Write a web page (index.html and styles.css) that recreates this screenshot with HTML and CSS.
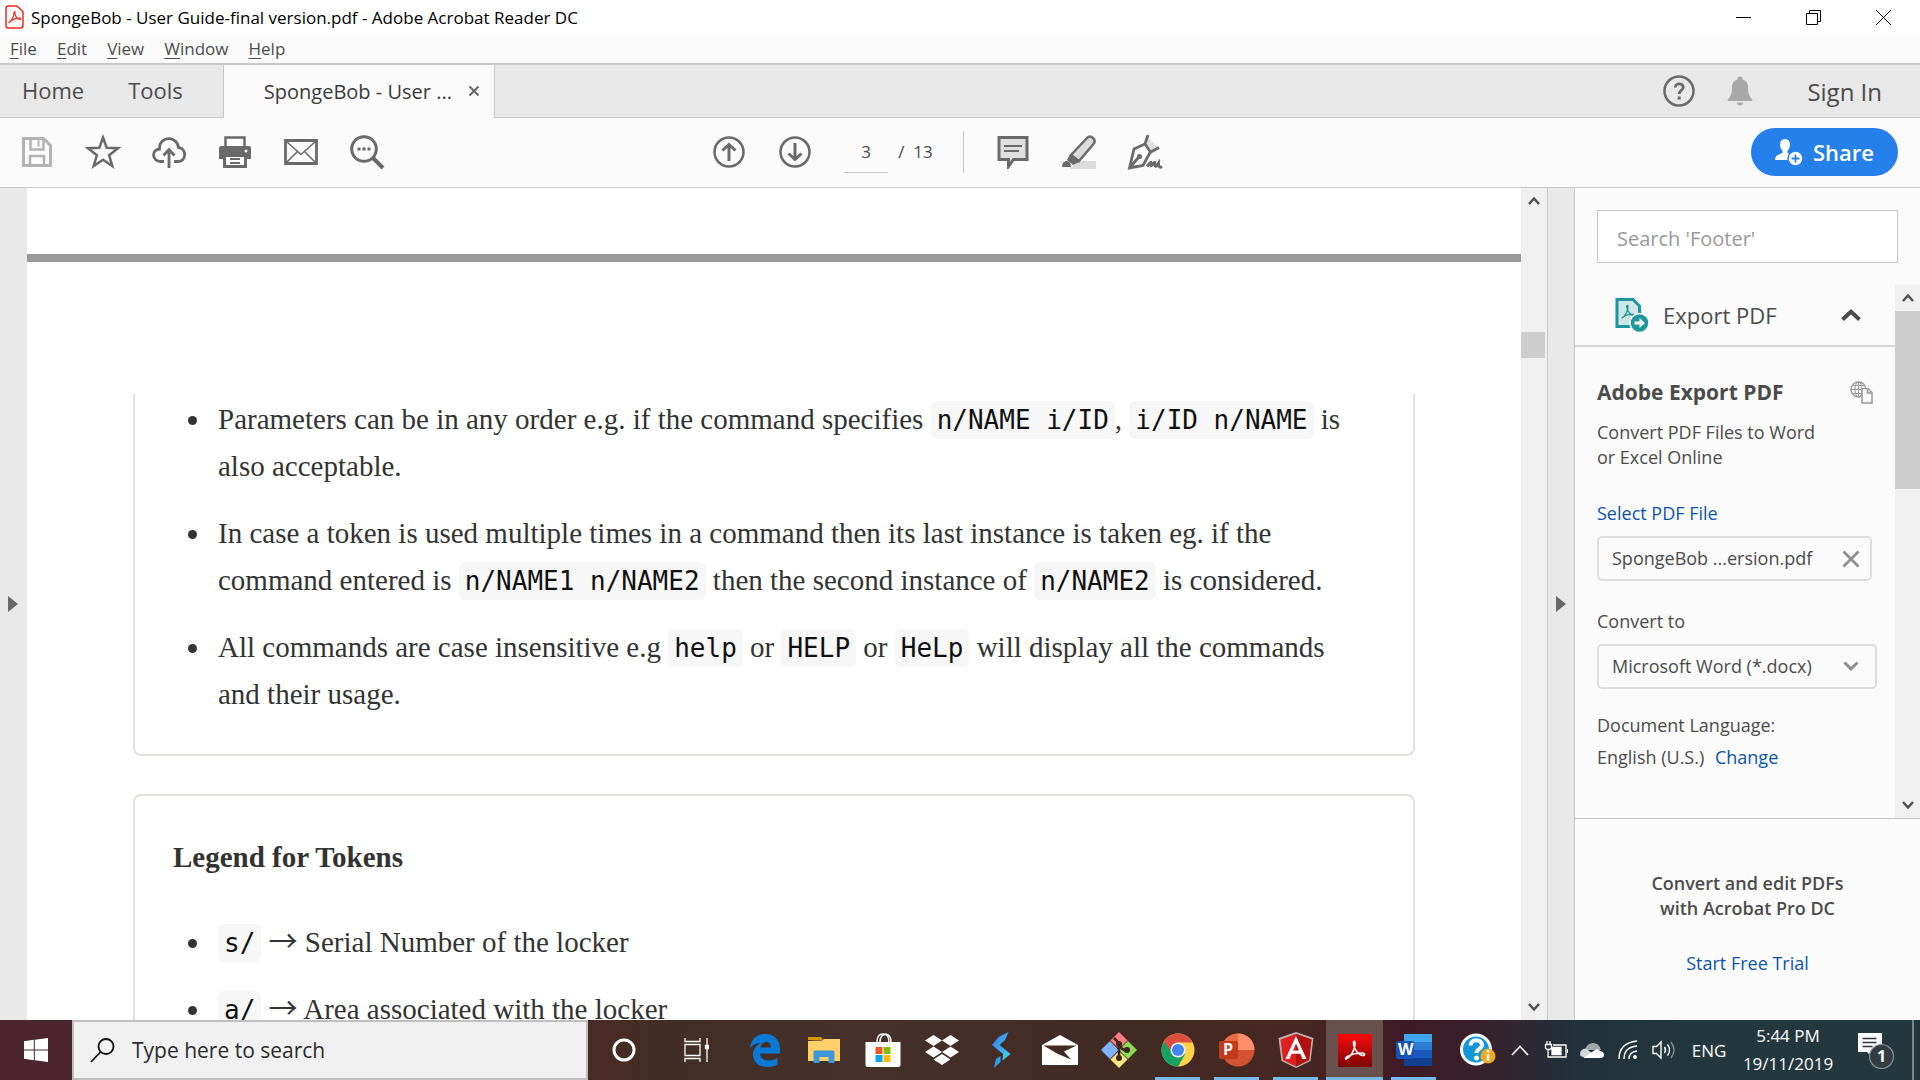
FILE: index.html
```html
<!DOCTYPE html>
<html lang="en">
<head>
<meta charset="utf-8">
<title>SpongeBob - User Guide-final version.pdf - Adobe Acrobat Reader DC</title>
<link rel="stylesheet" href="styles.css">
</head>
<body>
<div class="screen">
  <header class="titlebar">
    <svg class="app-logo" width="19" height="24" viewBox="0 0 19 24" fill="none" stroke="#f0281e"><path d="M3.500 1h8.500l6 5.500v14q0 2.500-2.500 2.500h-12q-2.500 0-2.500-2.500v-17q0-2.500 2.500-2.500z" stroke-width="1.500"/><path d="M4 17.500c2-1 5-6 5-9.500 0-2 1.200-2 1 0-.3 3 2.500 6.500 5 6.500 1 0 1-1.300-.5-1.300-3 0-7 1.300-9.500 3.300-1 .8-1.500 1.500-1 1z" stroke-width="1.200"/></svg>
    <span class="title-text">SpongeBob - User Guide-final version.pdf - Adobe Acrobat Reader DC</span>
    <div class="window-controls">
      <button aria-label="Minimize"><svg width="17" height="17" viewBox="0 0 17 17" fill="none" stroke="#000"><path d="M1 8.500h15"/></svg></button>
      <button aria-label="Restore"><svg width="17" height="17" viewBox="0 0 17 17" fill="none" stroke="#000"><path d="M1.500 4.500h11v11h-11zM4.500 4.500v-3h11v11h-3"/></svg></button>
      <button aria-label="Close"><svg width="17" height="17" viewBox="0 0 17 17" fill="none" stroke="#000"><path d="M1 1l15 15M16 1L1 16"/></svg></button>
    </div>
  </header>

  <nav class="menubar">
    <button><u>F</u>ile</button><button><u>E</u>dit</button><button><u>V</u>iew</button><button><u>W</u>indow</button><button><u>H</u>elp</button>
  </nav>

  <div class="tabs">
    <button class="tab home">Home</button>
    <button class="tab tools">Tools</button>
    <div class="tab-doc"><span>SpongeBob - User ...</span>
      <button aria-label="Close tab"><svg width="12" height="12" viewBox="0 0 12 12" fill="none" stroke="#666" stroke-width="2"><path d="M1.500 1.500l9 9M10.500 1.500l-9 9"/></svg></button>
    </div>
    <div class="account">
      <button aria-label="Help"><svg width="32" height="32" viewBox="0 0 32 32" fill="none" stroke="#6a6a6a"><circle cx="16" cy="16" r="14.500" stroke-width="2.500"/><path d="M12.200 12.500c0-5 8-4.800 8-.3 0 3-4 3.300-4 6.800" stroke-width="2.800"/><path d="M16.200 21.500v3" stroke-width="3"/></svg></button>
      <button aria-label="Notifications"><svg width="26" height="30" viewBox="0 0 26 30" fill="#a9a9a9"><path d="M10.500 3.500V2q0-1.500 2.500-1.500t2.500 1.500v1.500q5.500 1.500 5.500 8 0 8 3 10.500 1.500 1.500 1.500 3H.5q0-1.500 1.500-3 3-2.500 3-10.500 0-6.500 5.500-8zM9.500 26.500h7q-1 3-3.500 3t-3.500-3z"/></svg></button>
      <button class="sign-in">Sign In</button>
    </div>
  </div>

  <div class="toolbar">
    <div class="tool-group">
      <button aria-label="Save"><svg width="32" height="32" viewBox="0 0 32 32" fill="none" stroke="#b3b3b3" stroke-width="3"><path d="M2.500 2.500h20l7 7v20h-27z"/><path d="M9.500 2.500v11h13v-11M9 29.500v-9.500h14v9.500" stroke-width="2.500"/><path d="M17.500 4.500v6" stroke-width="2"/></svg></button>
      <button aria-label="Star"><svg width="36" height="36" viewBox="0 0 36 36" fill="none" stroke="#6a6a6a" stroke-width="2.500"><path d="M18 3.500l3.700 10.300 11.300.4-8.900 7 3.200 10.800L18 25.700 8.700 32l3.200-10.800-8.900-7 11.300-.4z"/></svg></button>
      <button aria-label="Upload"><svg width="34" height="34" viewBox="0 0 34 34" fill="none" stroke="#6a6a6a" stroke-width="2.800"><path d="M12 26.500H8.500C0 26.500-1 14.500 7.500 14 6.500 1 25 0 26.500 12.500 35 13.500 34.500 26.500 26 26.500h-4"/><path d="M17 33V15M11.500 20.500L17 14.500l5.500 6"/></svg></button>
      <button aria-label="Print"><svg width="34" height="34" viewBox="0 0 34 34"><path d="M7.500 2.500h19v12h-19z" fill="#fff" stroke="#6a6a6a" stroke-width="2.500"/><path d="M3 11h28q2 0 2 2v11H1V13q0-2 2-2z" fill="#6a6a6a"/><circle cx="28" cy="16" r="1.500" fill="#fff"/><path d="M6.500 20.500h21v11h-21z" fill="#fff" stroke="#6a6a6a" stroke-width="3"/><path d="M12 24h10M12 28h10" stroke="#6a6a6a" stroke-width="1.800"/></svg></button>
      <button aria-label="Email"><svg width="34" height="28" viewBox="0 0 34 28" fill="none" stroke="#6a6a6a"><path d="M1.500 2.500h31v23h-31z" stroke-width="2.800"/><path d="M2 3l15 13.500L32 3M2 25l11.500-11.500M32 25L20.500 13.500" stroke-width="1.600"/></svg></button>
      <button aria-label="Find"><svg width="36" height="36" viewBox="0 0 36 36" fill="none" stroke="#6a6a6a"><circle cx="15" cy="15" r="12.300" stroke-width="3"/><path d="M23.500 23.500L34 34" stroke-width="4"/><path d="M8.500 15h3M13.500 15h3M18.500 15h3" stroke-width="3"/></svg></button>
    </div>
    <div class="tool-group nav-group">
      <button aria-label="Previous page"><svg width="32" height="32" viewBox="0 0 32 32" fill="none" stroke="#6a6a6a"><circle cx="16" cy="16" r="14.500" stroke-width="2.500"/><path d="M16 25V9M9.500 14.500L16 8.500l6.500 6" stroke-width="3"/></svg></button>
      <button aria-label="Next page"><svg width="32" height="32" viewBox="0 0 32 32" fill="none" stroke="#6a6a6a"><circle cx="16" cy="16" r="14.500" stroke-width="2.500"/><path d="M16 7v16M9.500 17.500l6.500 6 6.500-6" stroke-width="3"/></svg></button>
      <input class="page-no" value="3" aria-label="Page number">
      <span class="page-total">/&nbsp; 13</span>
      <span class="divider"></span>
      <button aria-label="Comment"><svg width="32" height="34" viewBox="0 0 32 34" stroke="#6a6a6a"><path d="M2 2.500h28v22H16.500l-5 7v-7H2z" fill="#e0e0e0" stroke-width="3"/><path d="M7 11h18M7 16h15" stroke-width="2"/></svg></button>
      <button aria-label="Highlight"><svg width="36" height="36" viewBox="0 0 36 36"><path d="M9 35l8-8h18v8z" fill="#dcdcdc"/><path d="M10 21L26 4q3-3 6 0 3 2.500.5 6L18 27z" fill="#dcdcdc" stroke="#6a6a6a" stroke-width="2.500"/><path d="M9 20l9 8-6 3-6-5zM1 33q0-6 5-6 4 1 4 6z" fill="#6a6a6a"/></svg></button>
      <button aria-label="Sign"><svg width="36" height="36" viewBox="0 0 36 36" fill="none" stroke="#6a6a6a" stroke-width="2.800"><path d="M20 3l11 10-4 5-8-8z" fill="#e0e0e0" stroke="none"/><path d="M21 1l-3 9-11 5L2.500 34 16 31.500l7-13 9-5M18 10l6 8.500M3 33.500L11 24"/><circle cx="12.500" cy="22.500" r="1.200"/><path d="M20 32.500q5-7 4-2.500t4-2.500q-1 6 1.500 4.500l2-3q0 6 3.500 3.500"/></svg></button>
    </div>
    <button class="share"><svg width="28" height="28" viewBox="0 0 28 28"><path d="M5 7q0-6 5-6t5 6q0 3-2.500 6-.5 2 1 2.500 4 1.200 5 4v2.500H0q0-5 6.500-6.500 1.500-.5 1-2.500Q5 10 5 7z" fill="#fff"/><circle cx="20.500" cy="20.500" r="7.500" fill="#fff" stroke="#2680eb" stroke-width="1.500"/><path d="M20.500 16.500v8M16.500 20.500h8" stroke="#2680eb" stroke-width="1.800"/></svg>Share</button>
  </div>

  <main class="workspace">
    <button class="pane-handle left" aria-label="Show navigation pane"><i class="tri"></i></button>
    <section class="document">
      <div class="page-end"></div>
      <article class="page">
        <div class="card card-open">
          <ul>
            <li>Parameters can be in any order e.g. if the command specifies <code>n/NAME i/ID</code>, <code>i/ID n/NAME</code> is also acceptable.</li>
            <li>In case a token is used multiple times in a command then its last instance is taken eg. if the command entered is <code>n/NAME1 n/NAME2</code> then the second instance of <code>n/NAME2</code> is considered.</li>
            <li>All commands are case insensitive e.g <code>help</code> or <code>HELP</code> or <code>HeLp</code> will display all the commands and their usage.</li>
          </ul>
        </div>
        <div class="card">
          <h2>Legend for Tokens</h2>
          <ul>
            <li><code>s/</code> <span class="arrow">→</span> Serial Number of the locker</li>
            <li><code>a/</code> <span class="arrow">→</span> Area associated with the locker</li>
          </ul>
        </div>
      </article>
    </section>
    <div class="scrollbar doc-scroll">
      <button aria-label="Scroll up"><svg width="12" height="10" viewBox="0 0 12 10" fill="none" stroke="#505050" stroke-width="2.500"><path d="M1 8l5-5.500L11 8"/></svg></button>
      <div class="track"><div class="thumb"></div></div>
      <button aria-label="Scroll down"><svg width="12" height="10" viewBox="0 0 12 10" fill="none" stroke="#505050" stroke-width="2.500"><path d="M1 2l5 5.500L11 2"/></svg></button>
    </div>
    <button class="pane-handle right" aria-label="Hide tools pane"><i class="tri"></i></button>
    <aside class="side">
      <div class="side-search"><input placeholder="Search 'Footer'" aria-label="Search tools"></div>
      <div class="side-scroll">
        <div class="side-content">
          <button class="export-head">
            <svg width="34" height="36" viewBox="0 0 34 36" fill="none"><path d="M2 2.500h16l6.500 6.500v20.500H2z" fill="#cfe6e7" stroke="#1c979b" stroke-width="3"/><path d="M6.500 21c3-1 7-7 6.500-12-.5-1.500-2 0-1 2 1 4 4 8 8 7.500M7 21c3-3 7-4 12-3.500" stroke="#1c979b" stroke-width="1.300"/><circle cx="24.500" cy="26" r="9.500" fill="#1c979b" stroke="#fbfbfb" stroke-width="1.500"/><path d="M19.500 24.500h5v-3.500l5.500 5-5.500 5v-3.500h-5z" fill="#fff"/></svg>
            <span>Export PDF</span>
            <svg width="20" height="12" viewBox="0 0 20 12" fill="none" stroke="#4b4b4b" stroke-width="4"><path d="M1.500 10.500L10 2.800l8.500 7.700"/></svg>
          </button>
          <div class="export-body">
            <div class="export-title"><h3>Adobe Export PDF</h3>
              <svg width="23" height="23" viewBox="0 0 23 23" fill="none" stroke="#999"><circle cx="8.500" cy="8.500" r="7.500" stroke-width="1.300"/><ellipse cx="8.500" cy="8.500" rx="3.500" ry="7.500"/><path d="M8.500 1v15M1 8.500h15M2.500 4.500h12M2.500 12.500h12"/><path d="M12 7.500h6l4 4v10.500H12z" fill="#fbfbfb" stroke-width="1.500"/><path d="M17.500 8v4h4" stroke-width="1.500"/></svg>
            </div>
            <p class="blurb">Convert PDF Files to Word<br>or Excel Online</p>
            <a href="#" class="select-link">Select PDF File</a>
            <div class="file-box"><span>SpongeBob ...ersion.pdf</span><button aria-label="Remove file"><svg width="18" height="18" viewBox="0 0 18 18" fill="none" stroke="#8e8e8e" stroke-width="2.800"><path d="M1.500 1.500l15 15M16.500 1.500l-15 15"/></svg></button></div>
            <label for="fmt">Convert to</label>
            <div class="select-wrap">
              <select id="fmt"><option>Microsoft Word (*.docx)</option></select>
              <svg width="16" height="11" viewBox="0 0 16 11" fill="none" stroke="#8e8e8e" stroke-width="3"><path d="M1.500 1.500L8 8l6.500-6.500"/></svg>
            </div>
            <p class="lang">Document Language:<br>English (U.S.) <a href="#">Change</a></p>
          </div>
        </div>
        <div class="scrollbar">
          <button aria-label="Scroll up"><svg width="12" height="10" viewBox="0 0 12 10" fill="none" stroke="#505050" stroke-width="2.500"><path d="M1 8l5-5.500L11 8"/></svg></button>
          <div class="track"><div class="thumb"></div></div>
          <button aria-label="Scroll down"><svg width="12" height="10" viewBox="0 0 12 10" fill="none" stroke="#505050" stroke-width="2.500"><path d="M1 2l5 5.500L11 2"/></svg></button>
        </div>
      </div>
      <div class="promo"><p>Convert and edit PDFs<br>with Acrobat Pro DC</p><a href="#">Start Free Trial</a></div>
    </aside>
  </main>

  <footer class="taskbar">
    <button class="start" aria-label="Start"><svg width="24" height="24" viewBox="0 0 24 24" fill="#fff"><path d="M0 3.200l9.800-1.400v9.700H0zM10.800 1.700L24 0v11.500H10.800zM0 12.500h9.800v9.700L0 20.800zM10.800 12.500H24V24l-13.200-1.700z"/></svg></button>
    <div class="task-search"><svg width="25" height="25" viewBox="0 0 25 25" fill="none" stroke="#111" stroke-width="1.800"><circle cx="16" cy="8.500" r="7.500"/><path d="M10.500 14L1 24"/></svg><input placeholder="Type here to search" aria-label="Type here to search"></div>
    <div class="shell-buttons">
      <button aria-label="Cortana"><svg width="24" height="24" viewBox="0 0 24 24" fill="none" stroke="#fff" stroke-width="3"><circle cx="12" cy="12" r="10"/></svg></button>
      <button aria-label="Task View"><svg width="25" height="24" viewBox="0 0 25 24" fill="none" stroke="#fff" stroke-width="1.300"><path d="M1 0v3.500h15V0M1 6.500h15v11H1zM1 24v-3.500h15V24M23 0v24"/><path d="M21.500 7.500h3v3h-3z" fill="#fff"/></svg></button>
    </div>
    <div class="apps">
      <button aria-label="Edge"><svg width="32" height="34" viewBox="0 0 32 34" fill="#0a78d6"><path d="M1 15C2 6 8 1 16 1c9 0 15 6 15 15v4.500H11c.5 5 4 7 9 7 3.500 0 6-1 8.500-2.500v6.500c-3 2-7 2.500-10.500 2.500C9 34 4 28.500 4 21.500c0-5 3-9 7.500-11.500C7 10 3.500 12 1 15zM11.500 14.500h10.500c0-3.500-1.500-5.500-5-5.500-3 0-5 2.500-5.500 5.500z"/></svg></button>
      <button aria-label="File Explorer"><svg width="32" height="28" viewBox="0 0 32 28"><path d="M0 1h13l2 3H0z" fill="#d99a00"/><path d="M0 5l14-.5 2-1.500h16v22H0z" fill="#fdd068"/><path d="M5.500 27V16q0-1.500 1.500-1.500h18q1.500 0 1.500 1.500v11h-6v-6h-9v6z" fill="#3f97db"/></svg></button>
      <button aria-label="Store"><svg width="36" height="36" viewBox="0 0 36 36"><path d="M12 10Q12 2 18 2t6 8M15 10q0-7 6-8 5 1 5 8" fill="none" stroke="#fff" stroke-width="1.400"/><path d="M.5 10h35v23q0 2-2 2h-31q-2 0-2-2z" fill="#fff"/><path d="M10.500 15h7v7h-7z" fill="#f35325"/><path d="M18.500 15h7v7h-7z" fill="#81bc06"/><path d="M10.500 23h7v7h-7z" fill="#05a6f0"/><path d="M18.500 23h7v7h-7z" fill="#ffba08"/></svg></button>
      <button aria-label="Dropbox"><svg width="36" height="32" viewBox="0 0 36 32" fill="#fff"><path d="M9.500 1l8.500 5.500L9.500 12 1 6.500zM26.500 1L35 6.500 26.500 12 18 6.500zM9.500 12.500L18 18l-8.500 5.500L1 18zM26.500 12.500L35 18l-8.500 5.500L18 18zM18 20l8.500 5.500L18 31l-8.500-5.500z"/></svg></button>
      <button aria-label="Streamlabs"><svg width="20" height="36" viewBox="0 0 20 36"><defs><linearGradient id="s" x1="0" y1="0" x2="1" y2="1"><stop offset="0" stop-color="#3a6ff0"/><stop offset="1" stop-color="#3fe0f0"/></linearGradient></defs><path d="M17.500 0L14 8l-5.500 5 11 9-8 6.500.5-6.500L1 13l6.500-8z" fill="url(#s)"/><path d="M9.500 24v6L3 36l2-9z" fill="#2f9df0"/></svg></button>
      <button aria-label="Mail"><svg width="36" height="30" viewBox="0 0 36 30"><path d="M0 10L18 0l18 10v20H0z" fill="#fff"/><path d="M1.500 10.500h33L22 16.500l7 8-14-6z" fill="#412a22"/></svg></button>
      <button aria-label="Git"><svg width="36" height="36" viewBox="0 0 36 36"><path d="M18 0l8.500 8.500L18 17 9.500 8.500z" fill="#ff7d80"/><path d="M9 9l8.500 9L9 27 0 18z" fill="#80b3ff"/><path d="M27 9l9 9-9 9-9-9z" fill="#8cdb57"/><path d="M18 19l8.500 8.500L18 36l-8.500-8.500z" fill="#ffe680"/><path d="M13 6l5 5v15M18 12q3 7 8 6" fill="none" stroke="#3c231d" stroke-width="2.500"/><g fill="#3c231d"><circle cx="18" cy="12" r="3"/><circle cx="18" cy="26" r="3"/><circle cx="26" cy="18" r="3"/></g></svg></button>
      <button class="running" aria-label="Chrome"><svg width="34" height="34" viewBox="0 0 34 34"><circle cx="17" cy="17" r="16.500" fill="#ffd24a"/><path d="M17 17L2.700 8.800A16.500 16.500 0 0 0 17 33.500l7-12z" fill="#16a160"/><path d="M17 17H9.500L2.700 8.800A16.500 16.500 0 0 1 31.700 9.500H17z" fill="#dc4e41"/><circle cx="17" cy="17" r="7.500" fill="#f1f1f1"/><circle cx="17" cy="17" r="6" fill="#4285f4"/></svg></button>
      <button class="running" aria-label="PowerPoint"><svg width="36" height="34" viewBox="0 0 36 34"><circle cx="19" cy="17" r="16.500" fill="#d35230"/><path d="M19 .5A16.500 16.500 0 0 1 35.500 17H19z" fill="#ff8f6b"/><path d="M19 .5A16.500 16.500 0 0 0 2.500 17H19z" fill="#ed6c47"/><rect y="8" width="19" height="18" rx="2" fill="#c13b1b"/><text x="4" y="22" class="glyph small">P</text></svg></button>
      <button class="running" aria-label="Angular"><svg width="36" height="36" viewBox="0 0 36 36"><path d="M18 0l17.500 6-3 23L18 36 3.500 29 .5 6z" fill="#b3b3b3"/><path d="M18 2l15.500 5.500-2.500 20.500-13 6.500-13-6.500L2.500 7.500z" fill="#e02020"/><path d="M18 2l15.500 5.500-2.500 20.500-13 6.500z" fill="#b01010"/><path d="M18 4l10.500 23h-4l-2.200-5.300h-8.600L11.500 27h-4zm0 7.500l-3 7h6z" fill="#fff"/></svg></button>
      <button class="running active" aria-label="Acrobat Reader"><svg width="34" height="33" viewBox="0 0 34 33"><defs><linearGradient id="r" x1="0" y1="0" x2="0" y2="1"><stop offset="0" stop-color="#fb0a0a"/><stop offset="1" stop-color="#7d0606"/></linearGradient></defs><rect width="34" height="33" rx="1" fill="url(#r)"/><path d="M8 25c4-1 9-9 9-15 0-4-2-3-1.500 0 .5 5 5 11 9.500 11.500 2.500 0 2-2.500-1-2.500-4 0-10 1-14.500 3.500-2 1.200-2.500 2.500-1.500 2.500z" fill="none" stroke="#fff" stroke-width="1.600"/></svg></button>
      <button class="running" aria-label="Word"><svg width="36" height="32" viewBox="0 0 36 32"><path d="M8 0h28v8H8z" fill="#41a5ee"/><path d="M8 8h28v8H8z" fill="#2b7cd3"/><path d="M8 16h28v8H8z" fill="#185abd"/><path d="M8 24h28v8H8z" fill="#103f91"/><rect y="7" width="18" height="18" rx="2" fill="#1552b5"/><text x="2" y="21" class="glyph small">W</text></svg></button>
    </div>
    <div class="tray">
      <button class="support" aria-label="Support"><svg width="36" height="34" viewBox="0 0 36 34"><circle cx="16" cy="16.500" r="14.500" fill="#1296d8" stroke="#fff" stroke-width="3"/><path d="M10.500 12.500c0-7 11.500-7 11.500-.5 0 4-5.500 4-5.500 8" fill="none" stroke="#fff" stroke-width="4"/><circle cx="16.500" cy="25" r="2.500" fill="#fff"/><circle cx="28" cy="23" r="7.500" fill="#f5a81c"/><path d="M28 17v2.500M28 21v7" stroke="#fff" stroke-width="2.500"/></svg></button>
      <button aria-label="Hidden icons"><svg width="18" height="11" viewBox="0 0 18 11" fill="none" stroke="#fff" stroke-width="1.600"><path d="M1 10l8-8.500 8 8.500"/></svg></button>
      <button aria-label="Battery"><svg width="24" height="18" viewBox="0 0 24 18" fill="none" stroke="#fff" stroke-width="1.300"><path d="M9 4h13v12H4v-7"/><path d="M8 6.500h9v7H8z" fill="#fff"/><path d="M23.500 8v4M1.500 3.500h6v3q0 2-3 2t-3-2zM3 0v3M6 0v3"/></svg></button>
      <button aria-label="OneDrive"><svg width="26" height="17" viewBox="0 0 26 17"><path d="M6 8Q8 1 14 1t8 7z" fill="#a0a8a9"/><path d="M1 12q0-5 6-5.500L18 15H5q-4 0-4-3z" fill="#d5d8d9"/><path d="M4 16l12-8q3-2 5 1 4 .5 4 4 0 3-4 3z" fill="#fff"/></svg></button>
      <button aria-label="Network"><svg width="20" height="20" viewBox="0 0 20 20" fill="none" stroke="#fff" stroke-width="1.300"><path d="M1 19Q1 3 19 1M6 19Q6 7 19 6M11 19q0-7 8-8"/><circle cx="17" cy="17" r="1.300" fill="#fff"/></svg></button>
      <button aria-label="Volume"><svg width="24" height="20" viewBox="0 0 24 20" fill="none" stroke="#fff" stroke-width="1.400"><path d="M1 6.500h3.500L9 2v16l-4.500-4.500H1zM12.500 7q2 3 0 6M15.500 4.500q4 5.500 0 11"/><path d="M19 2q6 8 0 16" stroke="#7e8c8e"/></svg></button>
      <button class="lang-btn">ENG</button>
      <button class="clock">5:44 PM<br>19/11/2019</button>
      <button class="action" aria-label="Notifications"><svg width="38" height="38" viewBox="0 0 38 38"><path d="M1 2h24v19H15v5l-5-5H1z" fill="#fff"/><path d="M5.500 7.500h14M5.500 11.500h14M5.500 15.500h10" stroke="#333" stroke-width="1.400"/><circle cx="24.500" cy="25.500" r="12" fill="#333c3e" stroke="#8d9596" stroke-width="1.200"/><text x="20" y="31" class="glyph small">1</text></svg></button>
    </div>
  </footer>
</div>
</body>
</html>
```
FILE: styles.css
```css
* { box-sizing: border-box; }
body { margin: 0; font-family: "Open Sans", "Noto Sans", sans-serif; font-size: 17px; color: #4b4b4b; }
button { border: 0; padding: 0; margin: 0; background: none; font: inherit; color: inherit; display: flex; align-items: center; justify-content: center; }
input, select { font: inherit; color: inherit; border: 0; padding: 0; margin: 0; min-width: 0; }
a { color: #0d54ab; text-decoration: none; }
p, h2, h3, ul { margin: 0; }
svg { flex: none; display: block; }

.screen { height: 100vh; display: flex; flex-direction: column; overflow: hidden; background: #fbfbfb; }

.titlebar { height: 34px; flex: none; display: flex; align-items: center; gap: 7px; padding-left: 5px; background: #fff; color: #000; font-size: 17px; }
.title-text { flex: 1; white-space: nowrap; }
.window-controls { display: flex; height: 34px; padding-right: 2px; }
.window-controls button { width: 70px; }

.menubar { height: 29px; flex: none; display: flex; align-items: center; gap: 20px; padding-left: 10px; font-size: 17px; }
.menubar u { text-underline-offset: 3px; }

.tabs { height: 55px; flex: none; display: flex; background: #e9e9e9; border-top: 2px solid #c8c8c8; border-bottom: 1px solid #c8c8c8; font-size: 22px; }
.tab { padding-bottom: 2px; }
.home { padding-left: 22px; }
.tools { padding-left: 44px; padding-right: 40px; }
.tab-doc { display: flex; align-items: center; justify-content: space-between; width: 272px; margin-bottom: -1px; padding: 0 14px 1px 40px; background: #fbfbfb; border: solid #c8c8c8; border-width: 0 1px; font-size: 20px; color: #3a3a3a; white-space: nowrap; }
.account { margin-left: auto; display: flex; align-items: center; padding-right: 38px; }
.account svg { margin-right: 32px; }
.account .sign-in { padding-left: 22px; font-size: 24px; }

.toolbar { height: 70px; flex: none; display: flex; align-items: center; padding-bottom: 2px; border-bottom: 1px solid #c8c8c8; }
.tool-group { display: flex; align-items: center; flex: none; width: 36%; padding-left: 4px; }
.tool-group button { width: 66px; height: 48px; }
.nav-group { width: auto; flex: 1; padding-left: 5px; }
.page-no { width: 44px; height: 42px; margin: 0 10px 0 16px; text-align: center; background: none; border-bottom: 1px solid #c8c8c8; font-size: 17px; }
.page-total { font-size: 17px; }
.divider { width: 1px; height: 42px; margin: 0 16px 0 30px; background: #c8c8c8; }
.share { width: 147px; height: 48px; margin-right: 22px; gap: 10px; border-radius: 24px; background: #2680eb; color: #fff; font-size: 22px; font-weight: 600; }

.workspace { flex: 1; min-height: 0; display: flex; }
.pane-handle { width: 27px; flex: none; background: #e9e9e9; }
.pane-handle.left { justify-content: flex-start; padding-left: 8px; }
.pane-handle.right { border: solid #c8c8c8; border-width: 0 1px; width: 28px; }
.tri { border-left: 10px solid #686868; border-top: 8px solid transparent; border-bottom: 8px solid transparent; }

.document { flex: 1; min-width: 0; overflow: hidden; background: #fff; color: #333; font-family: "Liberation Serif", serif; font-size: 29px; line-height: 47px; }
.page-end { height: 74px; border-bottom: 8px solid #999; }
.page { padding: 132px 106px 0; }
.card { border: 2px solid #e1e1dd; border-radius: 8px; padding: 38px; margin-bottom: 38px; }
.card-open { border-top: 0; border-radius: 0 0 8px 8px; padding-top: 2px; padding-bottom: 36px; }
.card ul { padding-left: 39px; display: flex; flex-direction: column; gap: 20px; }
.card li { padding-left: 6px; padding-right: 16px; }
.card h2 { font-size: 29px; line-height: 47px; margin-bottom: 38px; }
code { font-family: "DejaVu Sans Mono", monospace; font-size: 26px; line-height: 1; color: #111; background: #f7f7f7; border-radius: 6px; padding: 4px 6px; }
.arrow { font-family: "Noto Sans CJK SC", sans-serif; line-height: 1; }

.scrollbar { width: 25px; flex: none; display: flex; flex-direction: column; background: #f0f0f0; }
.scrollbar button { height: 26px; }
.track { flex: 1; }
.thumb { background: #cdcdcd; height: 178px; }
.doc-scroll { width: 26px; }
.doc-scroll .thumb { margin-top: 118px; height: 26px; width: 24px; }

.side { width: 345px; flex: none; display: flex; flex-direction: column; font-size: 18px; }
.side-search { padding: 22px 22px 22px 22px; }
.side-search input { width: 100%; height: 53px; padding: 4px 19px 0; border: 1px solid #c8c8c8; background: #fff; font-size: 20px; }
input::placeholder { color: #999; opacity: 1; }
.side-scroll { display: flex; height: 533px; flex: none; }
.side-content { flex: 1; }
.export-head { width: 100%; height: 62px; padding: 0 34px 0 40px; gap: 14px; border-bottom: 2px solid #d6d6d6; font-size: 22px; }
.export-head span { flex: 1; text-align: left; }
.export-body { padding: 32px 18px 0 22px; display: flex; flex-direction: column; line-height: 25px; }
.export-title { display: flex; justify-content: space-between; align-items: center; padding-right: 4px; }
.export-title h3 { font-size: 21px; line-height: 26px; }
.blurb { margin-top: 15px; }
.select-link { margin-top: 31px; }
.file-box { display: flex; align-items: center; justify-content: space-between; width: 275px; height: 45px; margin: 10px 0 28px; padding: 0 10px 0 13px; border: 2px solid #dedede; border-radius: 5px; white-space: nowrap; }
.select-wrap { display: grid; margin-top: 10px; align-items: center; height: 45px; }
.select-wrap > * { grid-area: 1 / 1; }
.select-wrap svg { justify-self: end; margin-right: 18px; pointer-events: none; }
select { appearance: none; width: 100%; height: 45px; padding-left: 13px; border: 2px solid #dedede; border-radius: 5px; background: none; }
.lang { margin-top: 20px; line-height: 32px; }
.lang a { margin-left: 6px; }
.promo { flex: 1; border-top: 1px solid #c8c8c8; padding-top: 52px; text-align: center; line-height: 25px; font-size: 18px; }
.promo p { font-weight: 600; margin-bottom: 30px; }

.taskbar { height: 60px; flex: none; display: flex; color: #fff; background: linear-gradient(90deg, #4b2430 0%, #4a2430 28%, #4a2a24 31%, #422d24 34%, #45302a 45%, #412a22 60%, #472520 68%, #3d1a26 73%, #38202a 77%, #21303a 82%, #22383c 88%, #22383c 100%); }
.start { width: 72px; }
.task-search { width: 516px; display: flex; align-items: center; gap: 17px; padding-left: 16px; background: #f1f1f1; border: 2px solid #bfbfbf; color: #222; font-size: 21px; }
.task-search input { flex: 1; background: none; }
.task-search input::placeholder { color: #2b2b2b; }
.shell-buttons { display: flex; padding-right: 3px; }
.shell-buttons button { width: 72px; }
.apps { display: flex; }
.apps button { width: 59px; border: solid transparent; border-width: 3px 7px; }
.apps .running { border-bottom: 0; background: linear-gradient(#76b9ed, #76b9ed) bottom / 100% 3px no-repeat padding-box; padding-bottom: 3px; }
.apps .active { border-left-width: 1px; border-right-width: 1px; border-top: 0; padding-top: 3px; background-color: #68504f; }
.glyph { font: bold 18px "Open Sans", sans-serif; fill: #fff; }
.glyph.small { font-size: 16px; }
.tray { margin-left: auto; display: flex; border-right: 2px solid #7a8789; margin-right: 6px; }
.tray button { width: 36px; }
.tray .support { width: 48px; }
.tray .lang-btn { width: 54px; font-size: 17px; }
.tray .clock { width: 104px; font-size: 17px; line-height: 28px; }
.tray .action { width: 72px; }
```
